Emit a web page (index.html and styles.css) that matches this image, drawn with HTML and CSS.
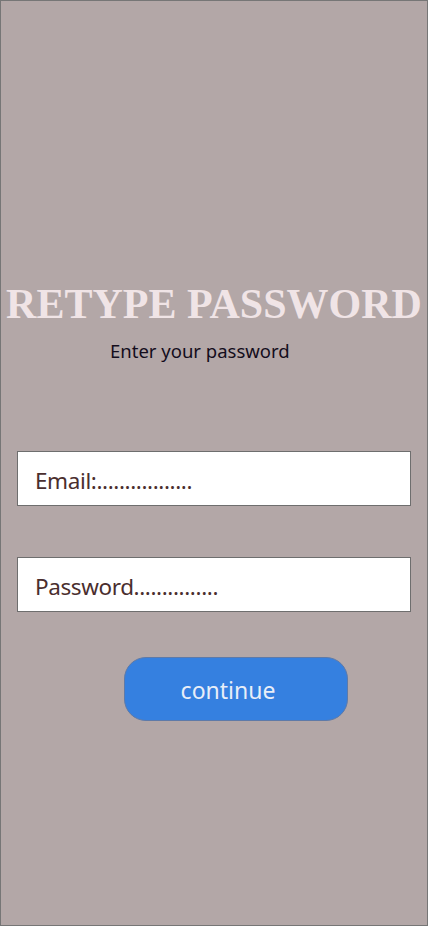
FILE: index.html
```html
<!DOCTYPE html>
<html>
<head>
<meta charset="utf-8">
<link rel="stylesheet" href="styles.css">
</head>
<body>
<div class="page">
  <h1 class="title">Retype Password</h1>
  <p class="subtitle">Enter your password</p>
  <form class="form">
    <div class="field">Email:.................</div>
    <div class="field">Password...............</div>
    <div class="actions"><button type="button" class="btn">continue</button></div>
  </form>
</div>
</body>
</html>
```
FILE: styles.css
```css
html, body { margin: 0; padding: 0; }
body { font-family: "Noto Sans", "Open Sans", sans-serif; }
.page {
  box-sizing: border-box;
  width: 428px;
  height: 926px;
  background: #b3a7a7;
  border: 1px solid #767676;
  padding-top: 278px;
}
.title {
  margin: 0;
  display: flex;
  justify-content: center;
  white-space: nowrap;
  font-family: "Liberation Serif", "DejaVu Serif", serif;
  font-weight: bold;
  text-transform: uppercase;
  font-size: 42px;
  line-height: 50px;
  color: #f0e4e6;
  letter-spacing: 0;
}
.subtitle {
  margin: 10px 0 0 109px;
  font-size: 18.5px;
  line-height: 24px;
  color: #140d1c;
}
.form {
  display: flex;
  flex-direction: column;
  padding: 0 16px;
  margin-top: 88px;
}
.field {
  box-sizing: border-box;
  height: 55px;
  background: #fff;
  border: 1px solid #6e6e6e;
  padding: 2px 0 0 17px;
  font-size: 22.5px;
  letter-spacing: -0.4px;
  line-height: 53px;
  color: #4a2e2e;
  margin-bottom: 51px;
}
.field + .field { margin-bottom: 45px; }
.actions { padding-left: 107px; }
.btn {
  box-sizing: border-box;
  width: 224px;
  height: 64px;
  border-radius: 22px;
  background: #3580e0;
  border: 1px solid #5e7aa8;
  color: #e8eef8;
  font-family: "Noto Sans", "Open Sans", sans-serif;
  font-size: 23px;
  padding: 2px 16px 0 0;
  cursor: pointer;
}
```
